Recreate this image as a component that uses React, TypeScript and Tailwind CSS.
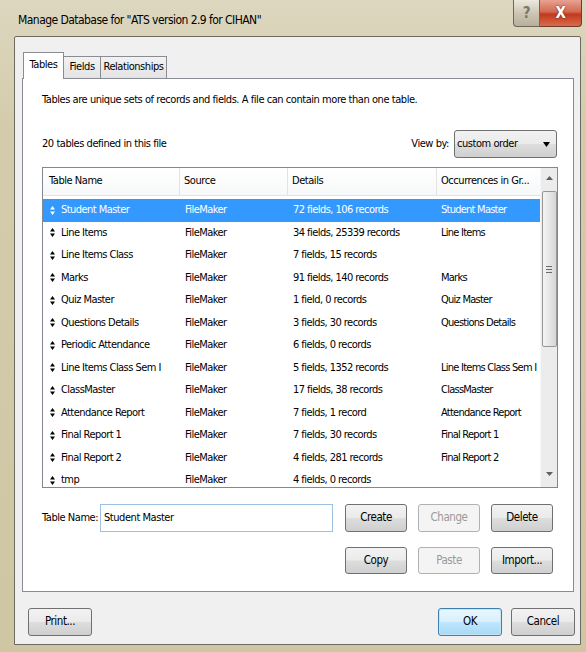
import React from 'react'

const font = 'font-["DejaVu_Sans_Condensed","Liberation_Sans",sans-serif] tracking-[-0.45px]'

type Row = [string, string, string, string]

const rows: Row[] = [
  ['Student Master', 'FileMaker', '72 fields, 106 records', 'Student Master'],
  ['Line Items', 'FileMaker', '34 fields, 25339 records', 'Line Items'],
  ['Line Items Class', 'FileMaker', '7 fields, 15 records', ''],
  ['Marks', 'FileMaker', '91 fields, 140 records', 'Marks'],
  ['Quiz Master', 'FileMaker', '1 field, 0 records', 'Quiz Master'],
  ['Questions Details', 'FileMaker', '3 fields, 30 records', 'Questions Details'],
  ['Periodic Attendance', 'FileMaker', '6 fields, 0 records', ''],
  ['Line Items Class Sem I', 'FileMaker', '5 fields, 1352 records', 'Line Items Class Sem I'],
  ['ClassMaster', 'FileMaker', '17 fields, 38 records', 'ClassMaster'],
  ['Attendance Report', 'FileMaker', '7 fields, 1 record', 'Attendance Report'],
  ['Final Report 1', 'FileMaker', '7 fields, 30 records', 'Final Report 1'],
  ['Final Report 2', 'FileMaker', '4 fields, 281 records', 'Final Report 2'],
  ['tmp', 'FileMaker', '4 fields, 0 records', ''],
]

// little up/down handle drawn before each table name
function Handle({ color }: { color: string }) {
  return (
    <svg width="5" height="9" viewBox="0 0 5 9" className="shrink-0">
      <path d="M2.5 0 L5 3.5 L0 3.5 Z M0 5.5 L5 5.5 L2.5 9 Z" fill={color} />
    </svg>
  )
}

type BtnProps = {
  label: string
  w?: string
  h?: string
  disabled?: boolean
  focused?: boolean
}

function Button({ label, w = 'w-[62px]', h = 'h-[28px]', disabled, focused }: BtnProps) {
  let look =
    'border-[#707070] bg-[linear-gradient(180deg,#f2f2f2_0%,#ebebeb_48%,#dddddd_52%,#cfcfcf_100%)] text-black'
  if (disabled) look = 'border-[#adb2b5] bg-[#f4f4f4] text-[#9a9a9a]'
  if (focused)
    look =
      'border-[#3c7fb1] bg-[linear-gradient(180deg,#eaf6fd_0%,#d9f0fc_48%,#bee6fd_52%,#a7d9f5_100%)] text-black shadow-[inset_0_0_0_1px_#c5e4f7]'
  return (
    <div
      className={`${w} ${h} flex shrink-0 items-center justify-center whitespace-nowrap rounded-[3px] border text-[11.5px] ${look}`}
    >
      {label}
    </div>
  )
}

function ScrollBar() {
  return (
    <div className="flex w-[17px] shrink-0 flex-col items-center border-l border-[#f7f7f7] bg-[#ececec]">
      <div className="flex h-[20px] items-center justify-center">
        <svg width="7" height="4" viewBox="0 0 7 4">
          <path d="M3.5 0 L7 4 L0 4 Z" fill="#606060" />
        </svg>
      </div>
      <div className="mt-[3px] flex h-[156px] w-[15px] items-center justify-center rounded-[2px] border border-[#979797] bg-[linear-gradient(90deg,#f3f3f3,#e6e6e6_50%,#d6d6d6)]">
        <div className="flex flex-col gap-[2px]">
          <div className="h-px w-[6px] bg-[#6a6a6a]" />
          <div className="h-px w-[6px] bg-[#6a6a6a]" />
          <div className="h-px w-[6px] bg-[#6a6a6a]" />
        </div>
      </div>
      <div className="flex-1" />
      <div className="flex h-[26px] items-center justify-center">
        <svg width="7" height="4" viewBox="0 0 7 4">
          <path d="M0 0 L7 0 L3.5 4 Z" fill="#606060" />
        </svg>
      </div>
    </div>
  )
}

function TableList() {
  return (
    <div className="mt-[9px] flex h-[321px] w-[516px] border border-[#828790] bg-white">
      <div className="flex w-[497px] flex-col overflow-hidden">
        {/* Column header */}
        <div className="flex h-[28px] shrink-0 whitespace-nowrap border-b border-[#e3e3e3] bg-[linear-gradient(180deg,#ffffff,#f7f8f9)]">
          <div className="flex w-[137px] shrink-0 items-center border-r border-[#e3e3e3] pl-[6px]">Table Name</div>
          <div className="flex w-[108px] shrink-0 items-center border-r border-[#e3e3e3] pl-[4px]">Source</div>
          <div className="flex w-[149px] shrink-0 items-center border-r border-[#e3e3e3] pl-[4px]">Details</div>
          <div className="flex w-[103px] shrink-0 items-center pl-[4px]">Occurrences in Gr...</div>
        </div>
        <div className="pt-[3px] tracking-[-0.55px]">
          {rows.map((r, i) => {
            const sel = i === 0
            return (
              <div
                key={r[0]}
                className={`flex h-[22.5px] items-center whitespace-nowrap ${
                  sel ? 'bg-[#3399ff] text-white' : 'text-black'
                }`}
              >
                <div className="flex w-[137px] shrink-0 items-center gap-[6px] pl-[7px]">
                  <Handle color={sel ? '#ffffff' : '#000000'} />
                  <span>{r[0]}</span>
                </div>
                <div className="w-[108px] shrink-0 pl-[5px]">{r[1]}</div>
                <div className="w-[149px] shrink-0 pl-[5px]">{r[2]}</div>
                <div className="w-[103px] shrink-0 pl-[4px] tracking-[-0.75px]">{r[3]}</div>
              </div>
            )
          })}
        </div>
      </div>
      <ScrollBar />
    </div>
  )
}

export default function App() {
  return (
    <div
      className={`${font} flex h-[652px] w-[586px] flex-col overflow-hidden bg-[linear-gradient(180deg,#ddd7c0_0%,#d3cbab_20%,#cfc6a3_100%)] text-[11px] text-black`}
    >
      {/* Title bar */}
      <div className="flex h-[36px] shrink-0 items-start">
        <div className="whitespace-nowrap pl-[18px] pt-[12px] text-[12px] leading-[16px] tracking-[-0.55px] text-black">
          Manage Database for "ATS version 2.9 for CIHAN"
        </div>
        <div className="ml-auto mr-[4px] flex h-[27px]">
          <div className="flex w-[27px] items-center justify-center rounded-bl-[4px] border border-t-0 border-[#6c6859] bg-[linear-gradient(180deg,#ece8dc,#cdc6b4_50%,#b8af9b)] text-[15px] font-bold text-[#7a776f]">
            ?
          </div>
          <div className="flex w-[42px] items-center justify-center rounded-br-[4px] border border-l-0 border-t-0 border-[#6c3a2e] bg-[linear-gradient(180deg,#e8a292,#d26a52_45%,#c0391f_55%,#d96b4a)] text-[15px] font-bold text-white [text-shadow:0_0_2px_#5a1a10]">
            X
          </div>
        </div>
      </div>

      {/* Client area */}
      <div className="ml-[14px] flex h-[609px] w-[567px] flex-col rounded-t-[2px] border border-[#6d6b5f] bg-[#f0f0f0]">
        {/* Tabs */}
        <div className="relative z-10 ml-[8px] mt-[15px] flex h-[26px] items-end whitespace-nowrap">
          <div className="-mb-px flex h-[27px] w-[41px] items-center justify-center border border-b-0 border-[#898c95] bg-white pb-[2px]">
            Tables
          </div>
          <div className="flex h-[22px] w-[37px] items-center justify-center border border-b-0 border-l-0 border-[#898c95] bg-[linear-gradient(180deg,#f2f2f2,#e3e3e3)]">
            Fields
          </div>
          <div className="flex h-[22px] w-[66px] items-center justify-center border border-b-0 border-l-0 border-[#898c95] bg-[linear-gradient(180deg,#f2f2f2,#e3e3e3)]">
            Relationships
          </div>
        </div>

        {/* Tab panel */}
        <div className="ml-[7px] flex h-[514px] w-[552px] flex-col border border-[#898c95] bg-white pl-[19px]">
          <div className="mt-[14px] whitespace-nowrap leading-[14px]">
            Tables are unique sets of records and fields. A file can contain more than one table.
          </div>

          <div className="mt-[23px] flex h-[28px] w-[515px] items-center whitespace-nowrap">
            <div>20 tables defined in this file</div>
            <div className="ml-auto mr-[5px]">View by:</div>
            <div className="flex h-[28px] w-[103px] items-center rounded-[3px] border border-[#707070] bg-[linear-gradient(180deg,#f2f2f2_0%,#ebebeb_48%,#dddddd_52%,#cfcfcf_100%)] pl-[2px] pr-[6px]">
              <span>custom order</span>
              <svg width="7" height="5" viewBox="0 0 7 5" className="ml-auto">
                <path d="M0 0 L7 0 L3.5 5 Z" fill="#000" />
              </svg>
            </div>
          </div>

          <TableList />

          <div className="mt-[16px] flex items-center whitespace-nowrap">
            <div className="w-[58px]">Table Name:</div>
            <div className="flex h-[28px] w-[233px] items-center border border-[#9ec1e3] bg-white pl-[3px]">
              Student Master
            </div>
            <div className="ml-[12px] flex gap-[11px]">
              <Button label="Create" />
              <Button label="Change" disabled />
              <Button label="Delete" />
            </div>
          </div>

          <div className="ml-[303px] mt-[15px] flex gap-[11px]">
            <Button label="Copy" h="h-[27px]" />
            <Button label="Paste" h="h-[27px]" disabled />
            <Button label="Import..." h="h-[27px]" />
          </div>
        </div>

        {/* Dialog buttons */}
        <div className="ml-[13px] mr-[5px] mt-[16px] flex">
          <Button label="Print..." w="w-[64px]" />
          <div className="ml-auto flex gap-[9px]">
            <Button label="OK" w="w-[64px]" focused />
            <Button label="Cancel" w="w-[64px]" />
          </div>
        </div>
      </div>
    </div>
  )
}
